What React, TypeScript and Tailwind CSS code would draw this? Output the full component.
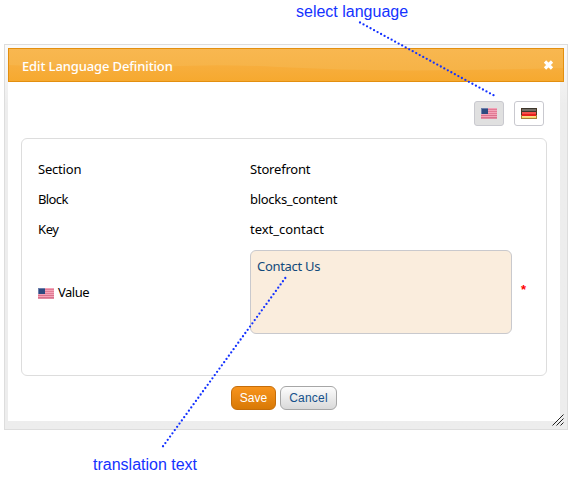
import React from 'react';

function UsFlag() {
  return (
    <svg width="16" height="11" viewBox="0 0 16 11" shapeRendering="crispEdges" className="block shrink-0">
      <rect width="16" height="11" fill="#f3a3b8" />
      {[1, 3, 5, 7, 9].map((y) => (
        <rect key={y} y={y} width="16" height="1" fill={y > 6 ? '#d9728c' : '#e27c95'} />
      ))}
      <rect y="10" width="16" height="1" fill="#e08ca2" />
      <rect width="7" height="6" fill="#2d4a80" />
      <path d="M0 .5H7M.5 0V6" stroke="#6c7fac" fill="none" />
    </svg>
  );
}

function DeFlag() {
  return (
    <svg width="16" height="11" viewBox="0 0 16 11" shapeRendering="crispEdges" className="block shrink-0">
      <rect width="16" height="4" fill="#3c352c" />
      <rect y="4" width="16" height="4" fill="#e8201c" />
      <rect y="8" width="16" height="3" fill="#f7d56b" />
      <rect x="1" y="1" width="14" height="2" fill="#736d65" />
      <rect x="1" y="4" width="14" height="2" fill="#f4504a" />
      <rect x="1" y="8" width="14" height="1" fill="#fbe08c" />
      <rect width="1" height="7" fill="#4e3722" />
      <rect x="15" width="1" height="7" fill="#4e3722" />
      <rect y="7" width="1" height="4" fill="#a77f35" />
      <rect x="15" y="7" width="1" height="4" fill="#a77f35" />
      <rect y="10" width="16" height="1" fill="#a77f35" />
    </svg>
  );
}

const rows = [
  { label: 'Section', value: 'Storefront', labelClass: 'tracking-[-0.2px]', valueClass: 'tracking-[-0.2px]' },
  { label: 'Block', value: 'blocks_content', labelClass: 'tracking-[-0.6px]', valueClass: 'tracking-[-0.3px]' },
  { label: 'Key', value: 'text_contact', labelClass: 'tracking-[-0.4px]', valueClass: 'tracking-[-0.03px]' },
];

export default function App() {
  return (
    <div className="relative h-[478px] w-[572px] overflow-hidden bg-white pl-1 pt-11 font-['Noto_Sans','Open_Sans',sans-serif] text-[13px] text-black">
      <div className="relative h-[386px] w-[564px] border border-[#dddddd] bg-linear-to-b from-[#fafafa] to-[#ededed] to-[60px] p-[3px]">
        <header className="relative flex h-[34px] w-[556px] items-center justify-between overflow-hidden border border-[#e38f0f] bg-linear-to-b from-[#f8b34a] to-[#f6a92f] pl-[13px] pr-[9px] text-white">
          <svg className="absolute inset-0" width="554" height="32" viewBox="0 0 554 32">
            <defs>
              <linearGradient id="gloss" x1="0" y1="0" x2="0" y2="1">
                <stop stopColor="#f8b750" />
                <stop offset="1" stopColor="#f6b347" />
              </linearGradient>
            </defs>
            <path d="M0 0H554V19Q480 21 400 21.5Q330 21 270 18Q200 14 130 19Q60 19 0 16Z" fill="url(#gloss)" />
          </svg>
          <h1 className="relative top-px text-[13px] font-medium leading-5 tracking-[-0.12px]">Edit Language Definition</h1>
          <svg className="relative" width="11" height="10" viewBox="0 0 11 10">
            <path d="M2 1.5L9 8.5M9 1.5L2 8.5" stroke="white" strokeWidth="3.2" />
          </svg>
        </header>
        <main className="h-[339px] w-[552px] bg-white pl-[13px] pr-[13px] pt-[19px]">
          <div className="flex justify-end gap-[10px] pr-[3px]">
            <button className="flex h-[25px] w-[30px] items-center justify-center rounded-[3px] border border-[#c9c9cf] bg-[#e0e0e0]"><UsFlag /></button>
            <button className="flex h-[25px] w-[30px] items-center justify-center rounded-[3px] border border-[#c9c9cf] bg-white"><DeFlag /></button>
          </div>
          <section className="mt-3 h-[238px] w-[526px] rounded-md border border-[#dddddd] pl-4 pt-4">
            {rows.map((r) => (
              <div key={r.label} className="flex h-[30px] items-center">
                <span className={`w-[212px] ${r.labelClass}`}>{r.label}</span>
                <span className={r.valueClass}>{r.value}</span>
              </div>
            ))}
            <div className="mt-[5px] flex h-[84px] items-center">
              <div className="flex w-[212px] items-center gap-1 pt-[2px]"><UsFlag /><span className="tracking-[-0.5px]">Value</span></div>
              <div className="h-[84px] w-[262px] rounded-md border border-[#c9c9cd] bg-[#faeddd] pl-[6px] pt-[6px] leading-[18px] tracking-[-0.3px] text-[#124a7b]">Contact Us</div>
              <span className="mb-[5px] ml-[9px] font-['Liberation_Sans',Arial,sans-serif] text-[13px] font-bold text-[#ff0000]">*</span>
            </div>
          </section>
          <div className="mt-[10px] flex gap-1 pl-[210px] font-['Liberation_Sans',Arial,sans-serif]">
            <button className="h-6 w-[45px] rounded-md border border-[#c56d0a] bg-linear-to-b from-[#f8941c] to-[#d87905] text-[12px] text-white">Save</button>
            <button className="h-6 w-[57px] rounded-md border border-[#a6a6a6] bg-linear-to-b from-[#fdfdfd] to-[#d9d9d9] text-[12px] tracking-[0.2px] text-[#15508b]">Cancel</button>
          </div>
        </main>
        <svg className="absolute bottom-[3px] right-[3px]" width="12" height="12" viewBox="0 0 12 12" stroke="#222" strokeWidth="1">
          <path d="M.5 11.5L11.5 .5M4.5 11.5L11.5 4.5M8.5 11.5L11.5 8.5" />
        </svg>
      </div>
      <svg className="pointer-events-none absolute inset-0" width="572" height="478" stroke="#1432ff" strokeWidth="2.3" strokeLinecap="round" strokeDasharray="0 4">
        <path d="M360 22.5L494 95.5" />
        <path d="M285.3 278L162.5 447" />
      </svg>
      <span className="absolute left-[296px] top-[3px] whitespace-nowrap font-['Liberation_Sans',Arial,sans-serif] text-[16px] leading-[18px] text-[#1432ff]">select language</span>
      <span className="absolute left-[93px] top-[456px] whitespace-nowrap font-['Liberation_Sans',Arial,sans-serif] text-[16px] leading-[18px] text-[#1432ff]">translation text</span>
    </div>
  );
}
